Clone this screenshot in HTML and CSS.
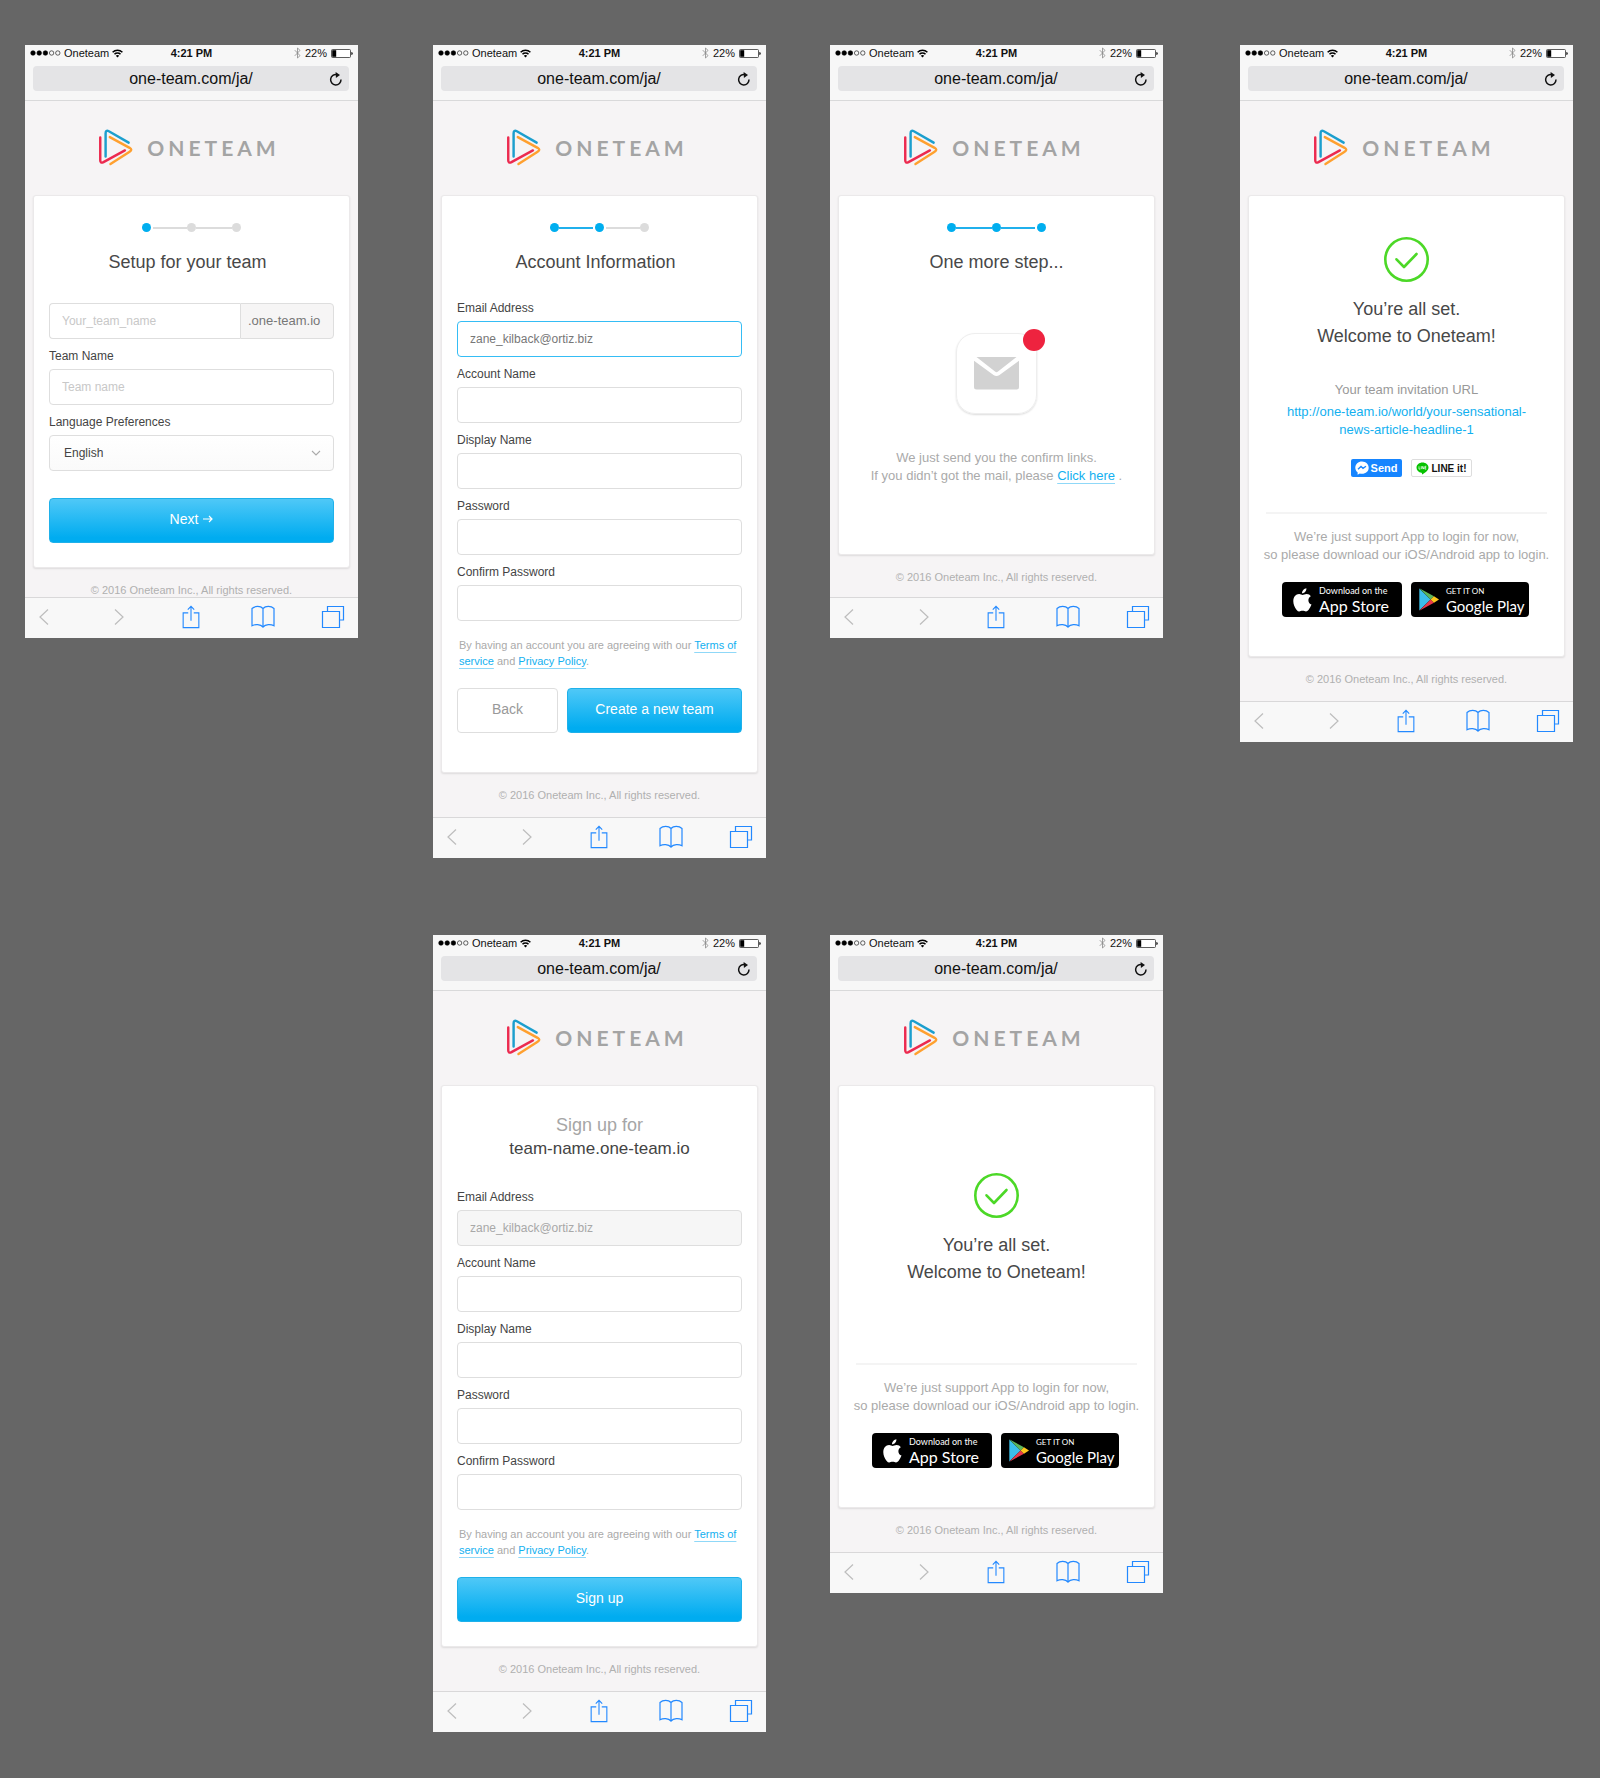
FILE: index.html
```html
<!DOCTYPE html>
<html lang="en">
<head>
<meta charset="utf-8">
<meta name="viewport" content="width=device-width, initial-scale=1">
<title>Oneteam – mobile sign up flow</title>
<link rel="stylesheet" href="styles.css">
</head>
<body>
<svg class="sprite" aria-hidden="true">
  <symbol id="i-signal" viewBox="0 0 31 6"><g stroke="#000" stroke-width=".6"><circle cx="3" cy="3" r="2.3"/><circle cx="9.2" cy="3" r="2.3"/><circle cx="15.4" cy="3" r="2.3"/><circle cx="21.6" cy="3" r="2.2" fill="none"/><circle cx="27.8" cy="3" r="2.2" fill="none"/></g></symbol>
  <symbol id="i-wifi" viewBox="0 0 11 9"><g fill="none" stroke="#000" stroke-width="1.5"><path d="M.6 3.2a7 7 0 0 1 9.8 0"/><path d="M2.5 5.3a4.2 4.2 0 0 1 6 0"/></g><path d="M5.5 8.6 3.8 6.8a2.4 2.4 0 0 1 3.4 0z"/></symbol>
  <symbol id="i-bluetooth" viewBox="0 0 7 12"><path d="M.8 3.2 6 8.6 3.5 11V1L6 3.4.8 8.8" fill="none" stroke="#888" stroke-width=".8"/></symbol>
  <symbol id="i-battery" viewBox="0 0 22 9"><rect x=".5" y=".5" width="19" height="8" rx="1" fill="#fff" stroke="#333" stroke-width=".8"/><rect x="1.2" y="1.2" width="4" height="6.6"/><path d="M20.4 3v3c.9-.2 1.3-.8 1.3-1.500s-.4-1.300-1.300-1.500z"/></symbol>
  <symbol id="i-reload" viewBox="0 0 14 14"><path d="M12 7.600A5.200 5.200 0 1 1 8 2.700" fill="none" stroke="#111" stroke-width="1.500"/><path d="M6.600 0 11 3 6.900 5.900z" fill="#111"/></symbol>
  <symbol id="i-logo" viewBox="240 265 105 114"><g fill="none" stroke-width="7.500" stroke-linecap="round" stroke-linejoin="round"><path stroke="#ec2a4f" d="M245.500 291v70q0 11 10 6l66-36"/><path stroke="#1c9fce" d="M262 350v-71q0-12 10-7l61 35"/><path stroke="#ffa02f" d="M275 290l61 33q10 6 0 12l-59 38"/></g></symbol>
  <symbol id="i-back" viewBox="0 0 24 24"><path d="M16 4.500 8 12l8 7.500" fill="none" stroke="#bdbdbd" stroke-width="1.200"/></symbol>
  <symbol id="i-forward" viewBox="0 0 24 24"><path d="M8 4.500 16 12l-8 7.500" fill="none" stroke="#bdbdbd" stroke-width="1.200"/></symbol>
  <symbol id="i-share" viewBox="0 0 24 26"><path d="M9 8.500H3.500v16h17v-16H15M12 17V1.500M8.500 5 12 1.500 15.500 5" fill="none" stroke="#2389ff" stroke-width="1.200"/></symbol>
  <symbol id="i-book" viewBox="0 0 24 24"><path d="M12 3.500v19M12 3.500C9.500.700 4 .700 1 3.500v17.300c3-1.800 8.500-1.800 11 1.200 2.500-3 8-3 11-1.200V3.500C20 .700 14.500.700 12 3.500z" fill="none" stroke="#2389ff" stroke-width="1.200"/></symbol>
  <symbol id="i-tabs" viewBox="0 0 24 24"><path d="M1.500 6.500h17v16h-17zM6.500 6.500v-5h16v13.500h-4" fill="none" stroke="#2389ff" stroke-width="1.200"/></symbol>
  <symbol id="i-check" viewBox="0 0 45 45"><g fill="none" stroke="#4cd827" stroke-width="2.600" stroke-linecap="round" stroke-linejoin="round"><circle cx="22.500" cy="22.500" r="21.200"/><path d="M12.500 22.300 20 30 32.500 17"/></g></symbol>
  <symbol id="i-mail" viewBox="0 0 45 33"><path fill="#d2d2d2" d="M2.500 0h40L24 14.600q-1.500 1.200-3 0zM0 3.800l19.500 14.100q3 2.200 6 0L45 3.800V30q0 2.500-2.500 2.500h-40Q0 32.500 0 30z"/></symbol>
  <symbol id="i-chevron" viewBox="0 0 10 6"><path d="M1 1l4 4 4-4" fill="none" stroke="#aaa" stroke-width="1.100"/></symbol>
  <symbol id="i-arrow" viewBox="0 0 10 8"><path d="M0 4h9M6 1l3 3-3 3" fill="none" stroke="#fff" stroke-width="1.200"/></symbol>
  <symbol id="i-messenger" viewBox="0 0 14 14"><path fill="#fff" d="M7 .500C3.200.500.300 3.200.300 6.700c0 1.900.900 3.500 2.300 4.600v2.400l2.200-1.200c.7.200 1.400.300 2.200.300 3.800 0 6.700-2.700 6.700-6.100S10.800.500 7 .500z"/><path d="M3 8.200 6 5.400l2 1.900L11 5.200" fill="none" stroke="#1685ff" stroke-width="1.300"/></symbol>
  <symbol id="i-line" viewBox="0 0 13 13"><path fill="#06c200" d="M6.500.500C3.200.500.500 2.700.500 5.700c0 2.600 2 4.600 5 5.100.7.100.4.900.5 1.800 2.600-1.300 6.500-3.600 6.500-7C12.500 2.700 9.800.500 6.500.500z"/><path d="M3 4.300v2.800h1.300M5.200 4.300v2.800M6.200 7.100V4.300l1.700 2.800V4.300M10.300 4.300H9v2.800h1.300M9 5.700h1.200" fill="none" stroke="#fff" stroke-width=".7"/></symbol>
  <symbol id="i-apple" viewBox="0 0 19 24"><path fill="#fff" d="M13.400.200c.1 1.400-.4 2.600-1.200 3.600-.9 1-2 1.600-3.200 1.500-.1-1.300.5-2.500 1.300-3.400.8-1 2.100-1.600 3.100-1.700zM17.800 8.200c-1.600 1-2.400 2.300-2.400 4 0 2 1.100 3.600 3.100 4.400-.7 2-1.700 3.800-3 5.400-.8.900-1.600 1.400-2.500 1.400-1.200 0-1.800-.7-3.400-.7s-2.200.7-3.400.7c-.9 0-1.700-.5-2.500-1.500C1.600 19.500.300 16.300.300 13.200c0-4.300 2.500-7.200 5.800-7.200 1.500 0 2.700.9 3.500.9.900 0 2.300-1 4.100-1 1.700 0 3.200.8 4.100 2.300z"/></symbol>
  <symbol id="i-play" viewBox="0 0 20 23"><path fill="#3bbfea" d="M.300.500v22L11.600 11.500z"/><path fill="#5cb65b" d="M.300.300 15 8.200l-3.400 3.300z"/><path fill="#e83a4b" d="M.300 22.700 15 14.800l-3.400-3.300z"/><path fill="#fdc71c" d="M15 8.200l5 3.300-5 3.300-3.400-3.300z"/></symbol>
</svg>

<main class="board">

  <section class="phone phone--compact">
    <header class="browser">
      <div class="status">
        <span class="status__side"><svg class="signal"><use href="#i-signal"/></svg>Oneteam<svg class="wifi"><use href="#i-wifi"/></svg></span>
        <b class="status__time">4:21 PM</b>
        <span class="status__side status__side--end"><svg class="bluetooth"><use href="#i-bluetooth"/></svg>22%<svg class="battery"><use href="#i-battery"/></svg></span>
      </div>
      <div class="address"><input class="address__url" aria-label="Address" value="one-team.com/ja/"><button class="address__reload" aria-label="Reload"><svg><use href="#i-reload"/></svg></button></div>
    </header>
    <div class="page">
      <div class="logo"><svg class="logo__mark"><use href="#i-logo"/></svg><span class="logo__name">ONETEAM</span></div>
      <form class="card">
        <div class="steps"><i class="dot dot--on"></i><i class="bar bar--after"></i><i class="dot"></i><i class="bar"></i><i class="dot"></i></div>
        <h1 class="title title--form">Setup for your team</h1>
        <div class="fields fields--plain">
          <div class="field field--joined"><input class="input" aria-label="Team URL" placeholder="Your_team_name"><span class="suffix">.one-team.io</span></div>
          <div class="field"><label class="label" for="team">Team Name</label><input class="input" id="team" placeholder="Team name"></div>
          <div class="field"><label class="label" for="lang">Language Preferences</label><div class="picker"><select class="input select" id="lang"><option>English</option></select><svg class="picker__arrow"><use href="#i-chevron"/></svg></div></div>
        </div>
        <div class="actions actions--first"><button type="button" class="btn">Next <svg class="arrow"><use href="#i-arrow"/></svg></button></div>
      </form>
      <footer class="legal">© 2016 Oneteam Inc., All rights reserved.</footer>
    </div>
    <nav class="toolbar"><button aria-label="Back"><svg><use href="#i-back"/></svg></button><button aria-label="Forward"><svg><use href="#i-forward"/></svg></button><button aria-label="Share"><svg><use href="#i-share"/></svg></button><button aria-label="Bookmarks"><svg><use href="#i-book"/></svg></button><button aria-label="Tabs"><svg><use href="#i-tabs"/></svg></button></nav>
  </section>

  <section class="phone">
    <header class="browser">
      <div class="status">
        <span class="status__side"><svg class="signal"><use href="#i-signal"/></svg>Oneteam<svg class="wifi"><use href="#i-wifi"/></svg></span>
        <b class="status__time">4:21 PM</b>
        <span class="status__side status__side--end"><svg class="bluetooth"><use href="#i-bluetooth"/></svg>22%<svg class="battery"><use href="#i-battery"/></svg></span>
      </div>
      <div class="address"><input class="address__url" aria-label="Address" value="one-team.com/ja/"><button class="address__reload" aria-label="Reload"><svg><use href="#i-reload"/></svg></button></div>
    </header>
    <div class="page">
      <div class="logo"><svg class="logo__mark"><use href="#i-logo"/></svg><span class="logo__name">ONETEAM</span></div>
      <form class="card card--roomy">
        <div class="steps"><i class="dot dot--on"></i><i class="bar bar--on bar--before"></i><i class="dot dot--on"></i><i class="bar bar--after"></i><i class="dot"></i></div>
        <h1 class="title title--form">Account Information</h1>
        <div class="fields">
          <div class="field"><label class="label" for="a-email">Email Address</label><input class="input input--active" id="a-email" type="email" value="zane_kilback@ortiz.biz"></div>
          <div class="field"><label class="label" for="a-account">Account Name</label><input class="input" id="a-account"></div>
          <div class="field"><label class="label" for="a-display">Display Name</label><input class="input" id="a-display"></div>
          <div class="field"><label class="label" for="a-pass">Password</label><input class="input" id="a-pass" type="password"></div>
          <div class="field"><label class="label" for="a-pass2">Confirm Password</label><input class="input" id="a-pass2" type="password"></div>
        </div>
        <p class="terms">By having an account you are agreeing with our <a href="#">Terms of service</a> and <a href="#">Privacy Policy</a>.</p>
        <div class="actions"><button type="button" class="btn btn--plain">Back</button><button type="button" class="btn">Create a new team</button></div>
      </form>
      <footer class="legal">© 2016 Oneteam Inc., All rights reserved.</footer>
    </div>
    <nav class="toolbar"><button aria-label="Back"><svg><use href="#i-back"/></svg></button><button aria-label="Forward"><svg><use href="#i-forward"/></svg></button><button aria-label="Share"><svg><use href="#i-share"/></svg></button><button aria-label="Bookmarks"><svg><use href="#i-book"/></svg></button><button aria-label="Tabs"><svg><use href="#i-tabs"/></svg></button></nav>
  </section>

  <section class="phone phone--notice">
    <header class="browser">
      <div class="status">
        <span class="status__side"><svg class="signal"><use href="#i-signal"/></svg>Oneteam<svg class="wifi"><use href="#i-wifi"/></svg></span>
        <b class="status__time">4:21 PM</b>
        <span class="status__side status__side--end"><svg class="bluetooth"><use href="#i-bluetooth"/></svg>22%<svg class="battery"><use href="#i-battery"/></svg></span>
      </div>
      <div class="address"><input class="address__url" aria-label="Address" value="one-team.com/ja/"><button class="address__reload" aria-label="Reload"><svg><use href="#i-reload"/></svg></button></div>
    </header>
    <div class="page">
      <div class="logo"><svg class="logo__mark"><use href="#i-logo"/></svg><span class="logo__name">ONETEAM</span></div>
      <div class="card card--notice">
        <div class="steps"><i class="dot dot--on"></i><i class="bar bar--on"></i><i class="dot dot--on"></i><i class="bar bar--on bar--before"></i><i class="dot dot--on"></i></div>
        <h1 class="title">One more step...</h1>
        <div class="mail"><svg class="mail__icon"><use href="#i-mail"/></svg><i class="mail__badge"></i></div>
        <p class="note">We just send you the confirm links.<br>If you didn’t got the mail, please <a href="#">Click here</a> .</p>
      </div>
      <footer class="legal">© 2016 Oneteam Inc., All rights reserved.</footer>
    </div>
    <nav class="toolbar"><button aria-label="Back"><svg><use href="#i-back"/></svg></button><button aria-label="Forward"><svg><use href="#i-forward"/></svg></button><button aria-label="Share"><svg><use href="#i-share"/></svg></button><button aria-label="Bookmarks"><svg><use href="#i-book"/></svg></button><button aria-label="Tabs"><svg><use href="#i-tabs"/></svg></button></nav>
  </section>

  <section class="phone">
    <header class="browser">
      <div class="status">
        <span class="status__side"><svg class="signal"><use href="#i-signal"/></svg>Oneteam<svg class="wifi"><use href="#i-wifi"/></svg></span>
        <b class="status__time">4:21 PM</b>
        <span class="status__side status__side--end"><svg class="bluetooth"><use href="#i-bluetooth"/></svg>22%<svg class="battery"><use href="#i-battery"/></svg></span>
      </div>
      <div class="address"><input class="address__url" aria-label="Address" value="one-team.com/ja/"><button class="address__reload" aria-label="Reload"><svg><use href="#i-reload"/></svg></button></div>
    </header>
    <div class="page">
      <div class="logo"><svg class="logo__mark"><use href="#i-logo"/></svg><span class="logo__name">ONETEAM</span></div>
      <div class="card card--roomy card--done">
        <svg class="check"><use href="#i-check"/></svg>
        <h1 class="title title--done">You’re all set.<br>Welcome to Oneteam!</h1>
        <div class="invite">
          <h2 class="invite__label">Your team invitation URL</h2>
          <a class="invite__url" href="#">http://one-team.io/world/your-sensational-<wbr>news-article-headline-1</a>
          <div class="share"><button class="share__btn share__btn--fb"><svg class="share__fb"><use href="#i-messenger"/></svg>Send</button><button class="share__btn share__btn--line"><svg class="share__line"><use href="#i-line"/></svg>LINE it!</button></div>
        </div>
        <div class="apps">
          <p class="note">We’re just support App to login for now,<br>so please download our iOS/Android app to login.</p>
          <div class="badges">
            <a class="badge badge--apple" href="#"><svg class="badge__apple"><use href="#i-apple"/></svg><span class="badge__text"><small>Download on the</small><strong>App Store</strong></span></a>
            <a class="badge badge--play" href="#"><svg class="badge__play"><use href="#i-play"/></svg><span class="badge__text"><small>GET IT ON</small><strong>Google Play</strong></span></a>
          </div>
        </div>
      </div>
      <footer class="legal">© 2016 Oneteam Inc., All rights reserved.</footer>
    </div>
    <nav class="toolbar"><button aria-label="Back"><svg><use href="#i-back"/></svg></button><button aria-label="Forward"><svg><use href="#i-forward"/></svg></button><button aria-label="Share"><svg><use href="#i-share"/></svg></button><button aria-label="Bookmarks"><svg><use href="#i-book"/></svg></button><button aria-label="Tabs"><svg><use href="#i-tabs"/></svg></button></nav>
  </section>

  <section class="phone phone--second">
    <header class="browser">
      <div class="status">
        <span class="status__side"><svg class="signal"><use href="#i-signal"/></svg>Oneteam<svg class="wifi"><use href="#i-wifi"/></svg></span>
        <b class="status__time">4:21 PM</b>
        <span class="status__side status__side--end"><svg class="bluetooth"><use href="#i-bluetooth"/></svg>22%<svg class="battery"><use href="#i-battery"/></svg></span>
      </div>
      <div class="address"><input class="address__url" aria-label="Address" value="one-team.com/ja/"><button class="address__reload" aria-label="Reload"><svg><use href="#i-reload"/></svg></button></div>
    </header>
    <div class="page">
      <div class="logo"><svg class="logo__mark"><use href="#i-logo"/></svg><span class="logo__name">ONETEAM</span></div>
      <form class="card">
        <h1 class="join"><span class="join__lead">Sign up for</span><span class="join__team">team-name.one-team.io</span></h1>
        <div class="fields fields--plain">
          <div class="field"><label class="label" for="s-email">Email Address</label><input class="input" id="s-email" type="email" value="zane_kilback@ortiz.biz" disabled></div>
          <div class="field"><label class="label" for="s-account">Account Name</label><input class="input" id="s-account"></div>
          <div class="field"><label class="label" for="s-display">Display Name</label><input class="input" id="s-display"></div>
          <div class="field"><label class="label" for="s-pass">Password</label><input class="input" id="s-pass" type="password"></div>
          <div class="field"><label class="label" for="s-pass2">Confirm Password</label><input class="input" id="s-pass2" type="password"></div>
        </div>
        <p class="terms">By having an account you are agreeing with our <a href="#">Terms of service</a> and <a href="#">Privacy Policy</a>.</p>
        <div class="actions"><button type="button" class="btn">Sign up</button></div>
      </form>
      <footer class="legal">© 2016 Oneteam Inc., All rights reserved.</footer>
    </div>
    <nav class="toolbar"><button aria-label="Back"><svg><use href="#i-back"/></svg></button><button aria-label="Forward"><svg><use href="#i-forward"/></svg></button><button aria-label="Share"><svg><use href="#i-share"/></svg></button><button aria-label="Bookmarks"><svg><use href="#i-book"/></svg></button><button aria-label="Tabs"><svg><use href="#i-tabs"/></svg></button></nav>
  </section>

  <section class="phone">
    <header class="browser">
      <div class="status">
        <span class="status__side"><svg class="signal"><use href="#i-signal"/></svg>Oneteam<svg class="wifi"><use href="#i-wifi"/></svg></span>
        <b class="status__time">4:21 PM</b>
        <span class="status__side status__side--end"><svg class="bluetooth"><use href="#i-bluetooth"/></svg>22%<svg class="battery"><use href="#i-battery"/></svg></span>
      </div>
      <div class="address"><input class="address__url" aria-label="Address" value="one-team.com/ja/"><button class="address__reload" aria-label="Reload"><svg><use href="#i-reload"/></svg></button></div>
    </header>
    <div class="page">
      <div class="logo"><svg class="logo__mark"><use href="#i-logo"/></svg><span class="logo__name">ONETEAM</span></div>
      <div class="card card--roomy card--welcome">
        <svg class="check"><use href="#i-check"/></svg>
        <h1 class="title title--done">You’re all set.<br>Welcome to Oneteam!</h1>
        <div class="apps apps--far">
          <p class="note">We’re just support App to login for now,<br>so please download our iOS/Android app to login.</p>
          <div class="badges">
            <a class="badge badge--apple" href="#"><svg class="badge__apple"><use href="#i-apple"/></svg><span class="badge__text"><small>Download on the</small><strong>App Store</strong></span></a>
            <a class="badge badge--play" href="#"><svg class="badge__play"><use href="#i-play"/></svg><span class="badge__text"><small>GET IT ON</small><strong>Google Play</strong></span></a>
          </div>
        </div>
      </div>
      <footer class="legal">© 2016 Oneteam Inc., All rights reserved.</footer>
    </div>
    <nav class="toolbar"><button aria-label="Back"><svg><use href="#i-back"/></svg></button><button aria-label="Forward"><svg><use href="#i-forward"/></svg></button><button aria-label="Share"><svg><use href="#i-share"/></svg></button><button aria-label="Bookmarks"><svg><use href="#i-book"/></svg></button><button aria-label="Tabs"><svg><use href="#i-tabs"/></svg></button></nav>
  </section>

</main>
</body>
</html>
```
FILE: styles.css
```css
* { box-sizing: border-box; }

body {
  margin: 0;
  background: #666;
  color: #555;
  font-family: "Liberation Sans", Arial, sans-serif;
}

h1, h2, p { margin: 0; font-weight: 400; }
button, input, select { font-family: inherit; margin: 0; }
button { border: 0; padding: 0; background: none; cursor: pointer; }
a { color: #12b0f0; text-decoration: none; }
svg { display: block; flex: none; }
.sprite { position: absolute; width: 0; height: 0; }

/* board of screens */
.board {
  display: grid;
  grid-template-columns: 408fr 397fr 410fr 333fr;
  gap: 77px 0;
  align-items: start;
  padding: 45px 27px 44px 25px;
}
.phone { width: 333px; background: #f6f4f5; }
.phone--second { grid-column: 2; }

/* browser chrome */
.browser {
  padding: 0 9px 9px 8px;
  background: #f7f7f7;
  border-bottom: 1px solid #d9d9da;
}
.status {
  display: grid;
  grid-template-columns: 1fr auto 1fr;
  align-items: center;
  height: 16px;
  margin: 0 -4px 5px -3px;
  font-size: 11px;
  color: #111;
}
.status__side { display: flex; align-items: center; gap: 3px; }
.status__side--end { justify-content: flex-end; gap: 4px; }
.signal { width: 31px; height: 6px; }
.wifi { width: 11px; height: 9px; }
.bluetooth { width: 7px; height: 12px; }
.battery { width: 22px; height: 9px; }
.address {
  display: grid;
  grid-template-columns: 26px 1fr 26px;
  align-items: center;
  height: 25px;
  border-radius: 4px;
  background: #e4e4e6;
}
.address__url {
  grid-column: 2;
  min-width: 0;
  border: 0;
  padding: 0;
  background: none;
  color: #111;
  font-size: 16px;
  text-align: center;
}
.address__reload svg { width: 14px; height: 14px; margin-left: 6px; }

.toolbar {
  display: grid;
  grid-template-columns: 75fr 72fr 72fr 70fr 37fr;
  align-items: center;
  height: 41px;
  padding: 0 0 2px 7px;
  background: #f8f8f8;
  border-top: 1px solid #d9d8d9;
}
.toolbar button { width: 24px; }
.toolbar svg { width: 24px; height: 24px; }

/* page */
.page { padding: 28px 8px 15px 8px; }
.phone--compact .page { padding-bottom: 0; }
.phone--notice .page { padding-bottom: 13px; }
.logo { display: flex; justify-content: center; align-items: center; gap: 14px; height: 37px; margin-bottom: 29px; padding-right: 9px; }
.logo__mark { width: 35px; height: 37px; }
.logo__name {
  color: #a4a4a4;
  font: 700 21px/24px Lato, sans-serif;
  letter-spacing: 4px;
  margin-right: -4px;
}
.card {
  padding: 27px 15px 24px;
  border: 1px solid #ebe9ea;
  border-radius: 3px;
  background: #fff;
  box-shadow: 0 1px 2px rgba(0, 0, 0, .1);
}
.card--roomy { padding-bottom: 39px; }
.card--notice { padding-bottom: 69px; }
.card--done { padding-top: 41px; }
.card--welcome { padding-top: 87px; }
.legal {
  margin-top: 15px;
  font-size: 11px;
  line-height: 14px;
  text-align: center;
  color: #b0b0b0;
}

/* progress */
.steps { display: flex; justify-content: center; align-items: center; margin-bottom: 18px; }
.dot { width: 9px; height: 9px; border-radius: 50%; background: #dcdcdc; }
.dot--on { background: #00aeef; }
.bar { width: 36px; height: 2px; background: #dcdcdc; }
.bar--on { background: #20b0ec; }
.bar--after { width: 34px; margin-left: 2px; }
.bar--before { width: 34px; margin-right: 2px; }

.title { font-size: 18px; line-height: 24px; text-align: center; color: #484848; }
.title--form { padding-right: 8px; }
.title--done { margin-top: 14px; line-height: 27px; }
.join { display: grid; text-align: center; line-height: 24px; }
.join__lead { font-size: 18px; color: #a6a6a6; }
.join__team { font-size: 17px; color: #444; }

/* forms */
.fields { display: grid; gap: 10px; margin-top: 27px; }
.fields--plain { margin-top: 29px; }
.field { display: grid; gap: 5px; }
.label { font-size: 12px; line-height: 15px; color: #444; }
.input {
  width: 100%;
  min-width: 0;
  height: 36px;
  padding: 0 12px 1px;
  border: 1px solid #dedede;
  border-radius: 4px;
  background: #fff;
  color: #777;
  font-size: 12px;
  outline: 0;
}
.input::placeholder { color: #c8c8c8; opacity: 1; }
.input:disabled { background: #f6f6f6; color: #a8a8a8; }
.input--active { border-color: #35bdf5; }
.field--joined {
  grid-template-columns: 1fr 94px;
  gap: 0;
}
.field--joined .input { border-right: 0; border-radius: 4px 0 0 4px; }
.suffix {
  padding-left: 7px;
  border: 1px solid #dedede;
  border-radius: 0 4px 4px 0;
  background: #f6f5f5;
  color: #777;
  font-size: 13px;
  line-height: 33px;
}
.picker { position: relative; }
.select { appearance: none; background: linear-gradient(#fff, #fafafa); color: #444; padding-left: 14px; }
.picker__arrow { position: absolute; right: 13px; top: 15px; width: 10px; height: 6px; pointer-events: none; }

.terms { margin: 16px 0 0 2px; font-size: 11px; line-height: 16px; color: #aaa; }
.terms a, .note a {
  text-decoration: underline 1px #8fd8f8;
  text-underline-offset: 3px;
  text-decoration-skip-ink: none;
}

.actions { display: flex; gap: 9px; margin-top: 19px; }
.actions--first { margin-top: 27px; }
.btn {
  display: flex;
  justify-content: center;
  align-items: center;
  gap: 5px;
  flex: 1;
  height: 45px;
  padding-bottom: 3px;
  border: 1px solid #1fb1ea;
  border-radius: 4px;
  background: linear-gradient(#4fc8f7, #00acf0 90%);
  color: #fff;
  font-size: 14px;
}
.btn--plain { flex: none; width: 101px; border-color: #dedede; background: #fff; color: #999; }
.arrow { width: 10px; height: 8px; }

/* notices */
.mail {
  position: relative;
  display: grid;
  place-items: center;
  width: 81px;
  height: 81px;
  margin: 59px auto 35px;
  border: 1px solid #eee;
  border-radius: 19px;
  box-shadow: 0 1px 2px rgba(0, 0, 0, .14);
}
.mail__icon { width: 45px; height: 33px; }
.mail__badge { position: absolute; right: -9px; top: -5px; width: 22px; height: 22px; border-radius: 50%; background: #ee233f; }
.note { margin: 0 -8px; font-size: 13px; line-height: 18px; text-align: center; white-space: nowrap; color: #aaa; }
.check { width: 45px; height: 45px; margin: 0 auto; }

.invite { padding: 0 20px; margin-top: 31px; text-align: center; font-size: 13px; line-height: 18px; }
.invite__label { margin-bottom: 4px; font-size: 13px; color: #999; }
.share { display: flex; justify-content: center; gap: 9px; margin: 20px 0 35px; padding-left: 9px; }
.share__btn {
  display: flex;
  justify-content: center;
  align-items: center;
  height: 18px;
  border-radius: 2px;
  font-weight: 700;
}
.share__btn--fb { gap: 2px; width: 51px; background: #1685ff; color: #fff; font-size: 11px; }
.share__btn--line { gap: 3px; width: 61px; border: 1px solid #ddd; background: #fff; color: #111; font-size: 10px; }
.share__fb { width: 14px; height: 14px; }
.share__line { width: 13px; height: 13px; }

.apps { margin: 0 2px; padding-top: 14px; border-top: 2px solid #f4f4f4; }
.apps--far { margin-top: 77px; }
.badges { display: flex; justify-content: center; gap: 9px; margin-top: 18px; padding-right: 2px; }
.badge {
  display: flex;
  align-items: center;
  height: 35px;
  border-radius: 4px;
  background: #000;
  color: #fff;
  font-family: Lato, sans-serif;
}
.badge--apple { gap: 7px; width: 120px; padding-left: 11px; }
.badge--play { gap: 7px; width: 118px; padding-left: 8px; }
.badge__apple { width: 19px; height: 24px; }
.badge__play { width: 20px; height: 23px; }
.badge__text { display: grid; white-space: nowrap; }
.badge small { font-size: 9px; line-height: 12px; }
.badge strong { font-size: 16px; line-height: 18px; font-weight: 400; }
.badge--play small { font-size: 8px; }
.badge--play strong { font-size: 15px; }
```
